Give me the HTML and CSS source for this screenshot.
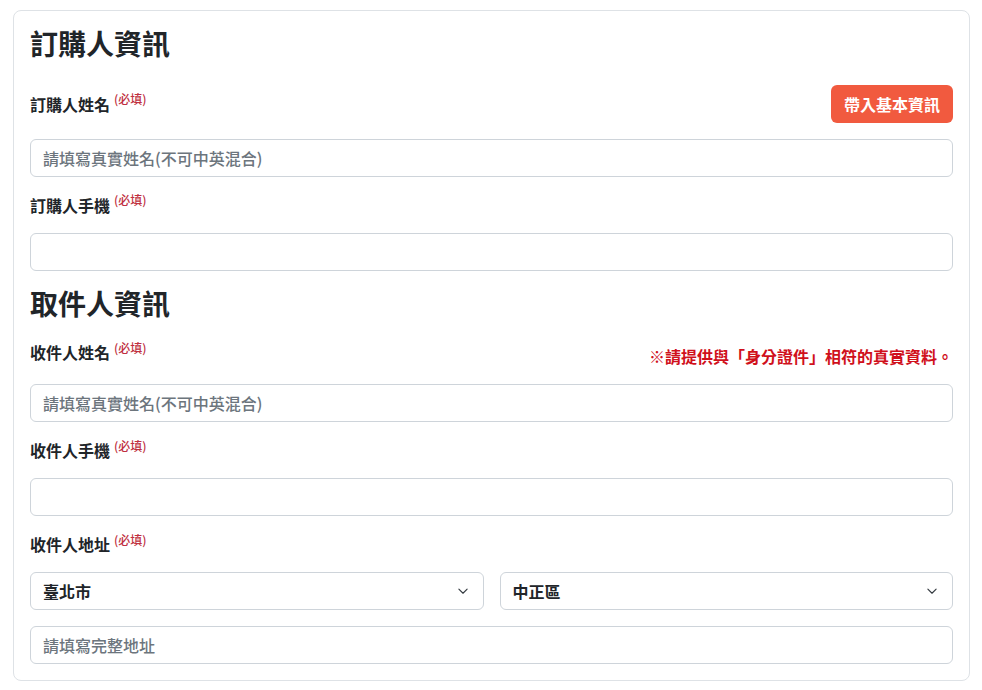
FILE: index.html
```html
<!DOCTYPE html>
<html lang="zh-Hant">
<head>
    <meta charset="UTF-8">
    <meta name="viewport" content="width=device-width, initial-scale=1.0">
    <title>訂購資訊</title>
    <link rel="stylesheet" href="styles.css">
</head>
<body>

    <div class="page">
        <div class="order-card">

            <h3 class="sec-title">訂購人資訊</h3>

            <div class="field">
                <div class="field-head with-btn">
                    <label class="field-label">訂購人姓名<sup class="req">(必填)</sup></label>
                    <button class="btn-fill" type="button">帶入基本資訊</button>
                </div>
                <input class="form-input" type="text" placeholder="請填寫真實姓名(不可中英混合)">
            </div>

            <div class="field">
                <div class="field-head">
                    <label class="field-label">訂購人手機<sup class="req">(必填)</sup></label>
                </div>
                <input class="form-input" type="tel">
            </div>

            <h3 class="sec-title">取件人資訊</h3>

            <div class="field">
                <div class="field-head with-note">
                    <label class="field-label">收件人姓名<sup class="req">(必填)</sup></label>
                    <span class="note">※請提供與「身分證件」相符的真實資料。</span>
                </div>
                <input class="form-input" type="text" placeholder="請填寫真實姓名(不可中英混合)">
            </div>

            <div class="field">
                <div class="field-head">
                    <label class="field-label">收件人手機<sup class="req">(必填)</sup></label>
                </div>
                <input class="form-input" type="tel">
            </div>

            <div class="field">
                <div class="field-head">
                    <label class="field-label">收件人地址<sup class="req">(必填)</sup></label>
                </div>
                <div class="addr-row">
                    <div class="select-wrap">
                        <select class="form-select">
                            <option>臺北市</option>
                        </select>
                        <svg class="chev" viewBox="0 0 16 16" width="12" height="12"><path d="M2.5 5.5l5.5 5.5 5.5-5.5" fill="none" stroke="#343a40" stroke-width="1.5" stroke-linecap="round" stroke-linejoin="round"/></svg>
                    </div>
                    <div class="select-wrap">
                        <select class="form-select">
                            <option>中正區</option>
                        </select>
                        <svg class="chev" viewBox="0 0 16 16" width="12" height="12"><path d="M2.5 5.5l5.5 5.5 5.5-5.5" fill="none" stroke="#343a40" stroke-width="1.5" stroke-linecap="round" stroke-linejoin="round"/></svg>
                    </div>
                </div>
                <input class="form-input" type="text" placeholder="請填寫完整地址">
            </div>

        </div>
    </div>

</body>
</html>
```

FILE: styles.css
```css
:root{
    --coltext: #212529;
    --colborder: #dee2e6;
    --colinput: #ced4da;
    --colplace: #6c757d;
    --colreq: #c0303f;
    --colnote: #d0101b;
    --colbtn: #f15a3f;
}
*{
    box-sizing: border-box;
}
body{
    margin: 0;
    background: #fff;
    color: var(--coltext);
    font-family: "Noto Sans CJK TC", "Noto Sans", sans-serif;
    font-size: 16px;
    line-height: 1.5;
}
.page{
    padding: 10px 12px 10px 13px;
}
.order-card{
    border: 1px solid var(--colborder);
    border-radius: 8px;
    padding: 16px;
}
.sec-title{
    margin: 0 0 20px;
    font-size: 28px;
    font-weight: 700;
    line-height: 1.2;
}
.field{
    margin-bottom: 16px;
}
.field:last-child{
    margin-bottom: 0;
}
.field-head{
    display: flex;
    justify-content: space-between;
    align-items: center;
    margin-bottom: 16px;
}
.field-head.with-btn{
    margin-top: 24px;
}
.field-head.with-note{
    align-items: flex-start;
}
.field-label{
    font-size: 16px;
    font-weight: 700;
}
.req{
    margin-left: 4px;
    font-size: 12px;
    font-weight: 500;
    line-height: 0;
    color: var(--colreq);
}
.note{
    padding-top: 4px;
    font-size: 16px;
    font-weight: 700;
    color: var(--colnote);
}
.btn-fill{
    height: 38px;
    padding: 0 13px;
    border: none;
    border-radius: 6px;
    background: var(--colbtn);
    color: #fff;
    font-family: inherit;
    font-size: 16px;
    font-weight: 700;
}
.form-input,
.form-select{
    display: block;
    width: 100%;
    height: 38px;
    padding: 0 12px;
    border: 1px solid var(--colinput);
    border-radius: 6px;
    background: #fff;
    color: var(--coltext);
    font-family: inherit;
    font-size: 16px;
    font-weight: 500;
}
.form-select{
    font-weight: 600;
}
.form-input::placeholder{
    color: var(--colplace);
    opacity: 1;
}
.addr-row{
    display: grid;
    grid-template-columns: 1fr 1fr;
    gap: 16px;
    margin-bottom: 16px;
}
.select-wrap{
    position: relative;
}
.form-select{
    appearance: none;
    -webkit-appearance: none;
}
.select-wrap .chev{
    position: absolute;
    right: 15px;
    top: 13px;
    pointer-events: none;
}
```
